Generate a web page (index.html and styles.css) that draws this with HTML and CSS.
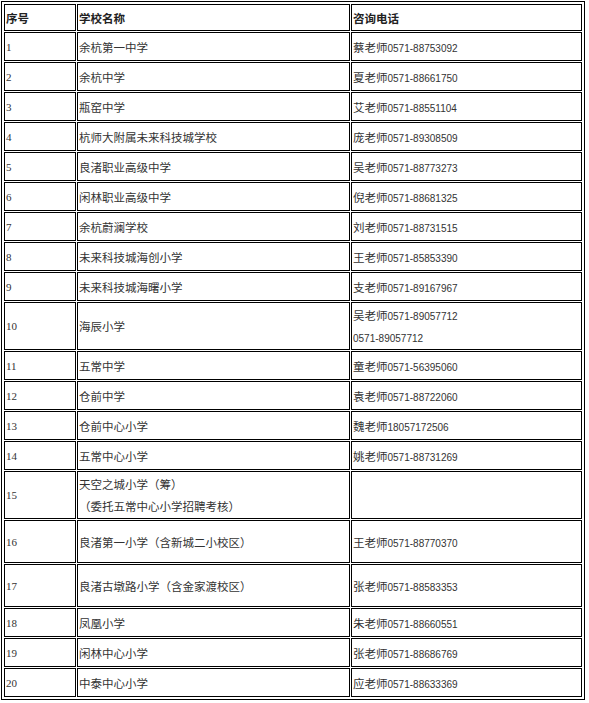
FILE: index.html
```html
<!DOCTYPE html>
<html lang="zh-CN">
<head>
<meta charset="utf-8">
<title>学校咨询电话</title>
<link rel="stylesheet" href="styles.css">
</head>
<body>
<table class="list">
  <colgroup>
    <col class="c-no">
    <col class="c-name">
    <col class="c-tel">
  </colgroup>
  <tr class="head">
    <td>序号</td><td>学校名称</td><td>咨询电话</td>
  </tr>
  <tr><td class="no">1</td><td>余杭第一中学</td><td>蔡老师<span class="tel">0571-88753092</span></td></tr>
  <tr><td class="no">2</td><td>余杭中学</td><td>夏老师<span class="tel">0571-88661750</span></td></tr>
  <tr><td class="no">3</td><td>瓶窑中学</td><td>艾老师<span class="tel">0571-88551104</span></td></tr>
  <tr><td class="no">4</td><td>杭师大附属未来科技城学校</td><td>庞老师<span class="tel">0571-89308509</span></td></tr>
  <tr><td class="no">5</td><td>良渚职业高级中学</td><td>吴老师<span class="tel">0571-88773273</span></td></tr>
  <tr><td class="no">6</td><td>闲林职业高级中学</td><td>倪老师<span class="tel">0571-88681325</span></td></tr>
  <tr><td class="no">7</td><td>余杭蔚澜学校</td><td>刘老师<span class="tel">0571-88731515</span></td></tr>
  <tr><td class="no">8</td><td>未来科技城海创小学</td><td>王老师<span class="tel">0571-85853390</span></td></tr>
  <tr><td class="no">9</td><td>未来科技城海曙小学</td><td>支老师<span class="tel">0571-89167967</span></td></tr>
  <tr class="tall"><td class="no">10</td><td>海辰小学</td><td><p>吴老师<span class="tel">0571-89057712</span></p><p><span class="tel">0571-89057712</span></p></td></tr>
  <tr><td class="no">11</td><td>五常中学</td><td>童老师<span class="tel">0571-56395060</span></td></tr>
  <tr><td class="no">12</td><td>仓前中学</td><td>袁老师<span class="tel">0571-88722060</span></td></tr>
  <tr><td class="no">13</td><td>仓前中心小学</td><td>魏老师<span class="tel">18057172506</span></td></tr>
  <tr><td class="no">14</td><td>五常中心小学</td><td>姚老师<span class="tel">0571-88731269</span></td></tr>
  <tr class="tall"><td class="no">15</td><td><p>天空之城小学（筹）</p><p>（委托五常中心小学招聘考核）</p></td><td></td></tr>
  <tr class="mid"><td class="no">16</td><td>良渚第一小学（含新城二小校区）</td><td>王老师<span class="tel">0571-88770370</span></td></tr>
  <tr class="mid"><td class="no">17</td><td>良渚古墩路小学（含金家渡校区）</td><td>张老师<span class="tel">0571-88583353</span></td></tr>
  <tr><td class="no">18</td><td>凤凰小学</td><td>朱老师<span class="tel">0571-88660551</span></td></tr>
  <tr><td class="no">19</td><td>闲林中心小学</td><td>张老师<span class="tel">0571-88686769</span></td></tr>
  <tr><td class="no">20</td><td>中泰中心小学</td><td>应老师<span class="tel">0571-88633369</span></td></tr>
</table>
</body>
</html>
```
FILE: styles.css
```css
html, body {
  margin: 0;
  padding: 0;
  background: #ffffff;
}

body {
  padding: 1px 0 0 1px;
  font-family: "Noto Sans CJK SC", "Liberation Sans", sans-serif;
  font-size: 11.5px;
  color: #333333;
}

.list {
  border: 1px solid #000000;
  padding: 1px;
  border-collapse: separate;
  border-spacing: 1px;
  table-layout: fixed;
  width: 584px;
}

.c-no { width: 72px; }
.c-name { width: 273px; }
.c-tel { width: 231px; }

.list td {
  border: 1px solid #000000;
  padding: 0 1px;
  height: 29px;
  box-sizing: border-box;
  vertical-align: middle;
  line-height: 22px;
  white-space: nowrap;
  overflow: hidden;
}

.list .head td {
  height: 27px;
  font-weight: bold;
  color: #222222;
}

.list .tall td { height: 48px; }
.list .mid td { height: 43px; }

.list td p {
  margin: 0;
  height: 22px;
}

.list td.no {
  font-family: "Liberation Serif", "Noto Sans CJK SC", serif;
  font-size: 11px;
}

.tel {
  font-family: "Liberation Sans", sans-serif;
  font-size: 10px;
  line-height: 1;
}
```
